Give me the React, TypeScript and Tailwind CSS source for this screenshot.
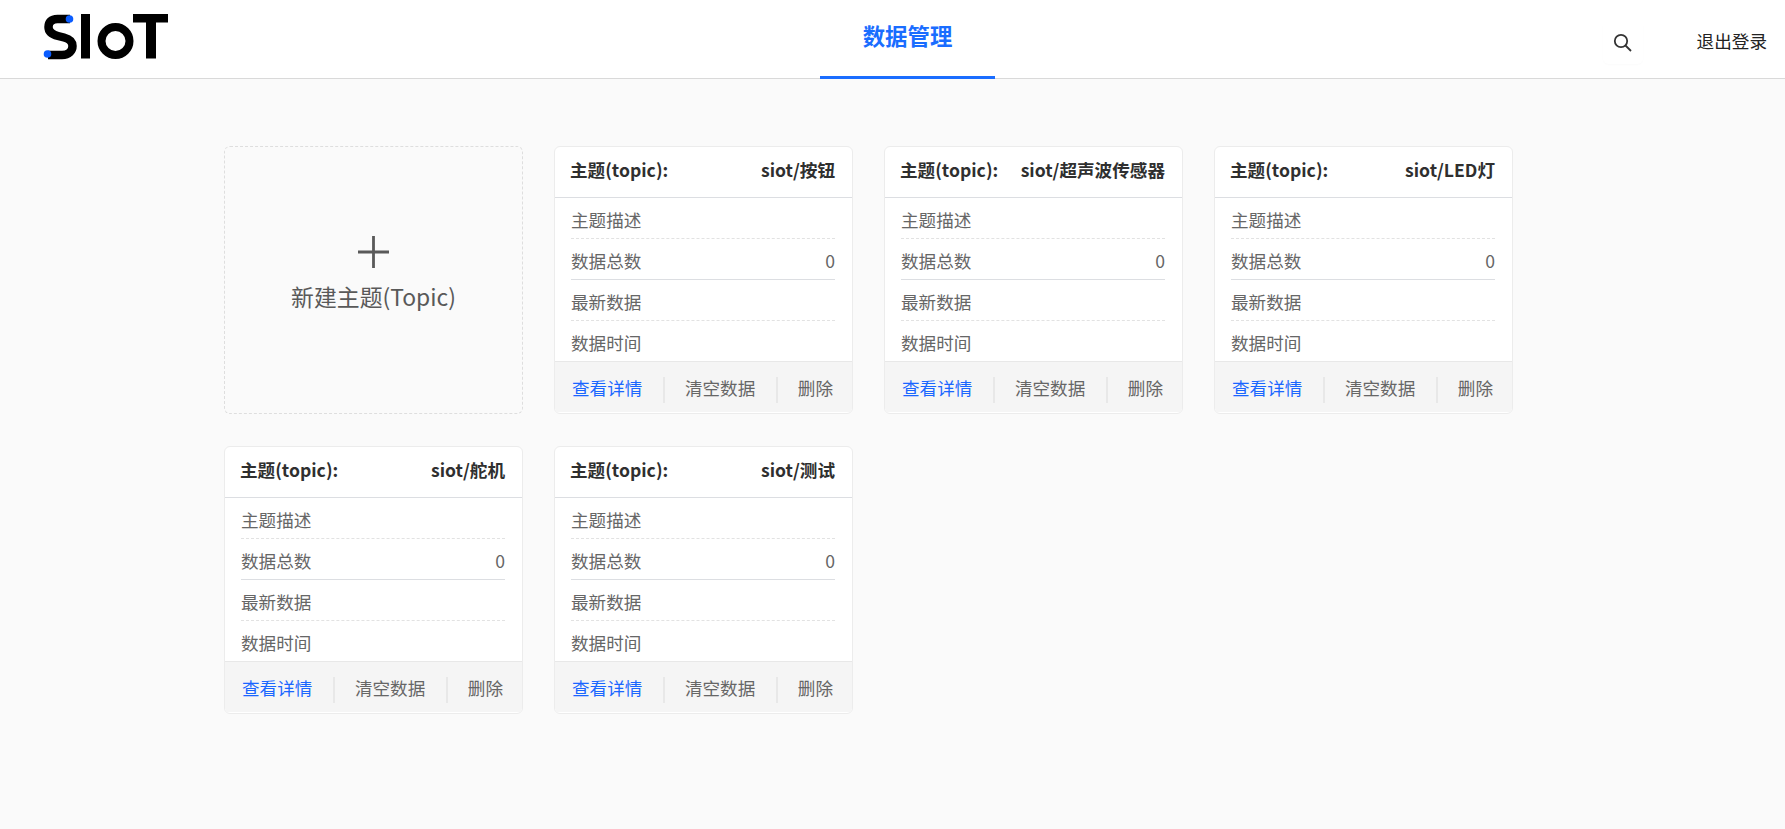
const topics = ['按钮', '超声波传感器', 'LED灯', '舵机', '测试'];

function Logo() {
  return (
    <svg width="130" height="50" viewBox="0 0 130 50" className="block">
      <path d="M27 4.500H14.500C8 4.500 5.500 8 5.500 12.500C5.500 17.500 9 20 15 21.500L21 23C27 24.500 29.500 27 29.500 31.500C29.500 36 26 40.500 19 40.500H5" fill="none" stroke="#000" strokeWidth="8.500" transform="translate(0 0.500)" />
      <rect x="38" y="0" width="9" height="44.500" fill="#000" />
      <circle cx="72.500" cy="27" r="14" fill="none" stroke="#000" strokeWidth="8" />
      <rect x="90" y="0" width="35" height="8.500" fill="#000" />
      <rect x="103" y="0" width="10" height="44.500" fill="#000" />
      <circle cx="26.500" cy="5" r="3.800" fill="#0a5cff" />
      <circle cx="4.500" cy="40" r="3.800" fill="#0a5cff" />
    </svg>
  );
}

function Row({ label, value, solid }: { label: string; value?: string; solid?: boolean }) {
  return (
    <div className={`flex h-[41px] items-center justify-between border-b pt-[5px] ${solid ? 'border-solid border-[#dcdee2]' : 'border-dashed border-[#e2e2e2]'}`}>
      <span>{label}</span>
      {value && <span>{value}</span>}
    </div>
  );
}

function TopicCard({ name }: { name: string }) {
  return (
    <div className="h-[268px] w-[299px] overflow-hidden rounded-md border border-[#ececec] bg-white">
      <div className="flex h-[51px] items-center justify-between border-b border-[#dcdee2] pb-[4px] pl-[15px] pr-[17px] font-bold text-[#2f2f2f]">
        <span>主题(topic):</span>
        <span>siot/{name}</span>
      </div>
      <div className="h-[164px] border-b border-[#e8e8e8] pl-[16px] pr-[17px] text-[#666]">
        <Row label="主题描述" />
        <Row label="数据总数" value="0" solid />
        <Row label="最新数据" />
        <div className="flex h-[40px] items-center pt-[5px]">数据时间</div>
      </div>
      <div className="flex h-[50px] items-center justify-between bg-[#f5f5f5] pl-[17px] pr-[19px] pt-[2px] text-[#666]">
        <span className="text-[#1a66ff]">查看详情</span>
        <span className="mt-[4px] h-[26px] w-[2px] bg-[#e8e8e8]" />
        <span>清空数据</span>
        <span className="mt-[4px] h-[26px] w-[2px] bg-[#e8e8e8]" />
        <span>删除</span>
      </div>
    </div>
  );
}

export default function App() {
  return (
    <div className="min-h-[829px] bg-[#fafafa] text-[17.6px] [font-family:'Noto_Sans_CJK_SC','Noto_Sans',sans-serif]">
      <header className="flex h-[79px] items-center justify-between border-b border-[#d9d9d9] bg-white pl-[43px] pr-[18px]">
        <Logo />
        <nav className="ml-[647px] flex h-[79px] w-[175px] items-center justify-center border-b-[3px] border-[#1a6dff] pb-[3px] text-[22.4px] font-semibold text-[#1a6dff]">
          数据管理
        </nav>
        <div className="ml-auto mt-[6px] flex items-center gap-[54px] text-[#222]">
          <div className="flex h-[44px] w-[40px] items-center justify-center rounded-md pt-[2px] shadow-[0_1px_2px_rgba(0,0,0,0.02)]">
            <svg width="20" height="20" viewBox="0 0 20 20" fill="none" stroke="#333" strokeWidth="1.800">
              <circle cx="8" cy="8" r="6.200" />
              <path d="M12.500 12.500L18 18" />
            </svg>
          </div>
          <span className="pb-[1px]">退出登录</span>
        </div>
      </header>
      <main className="ml-[224px] grid w-[1200px] grid-cols-[repeat(4,299px)] gap-x-[31px] gap-y-[32px] pt-[67px]">
        <div className="flex h-[268px] flex-col items-center justify-center rounded-md border border-dashed border-[#dedede] pb-[12px] text-[22.88px] text-[#595959]">
          <svg width="31" height="32" viewBox="0 0 31 32" className="mb-[12px]">
            <path d="M15.500 0V32M0 16H31" stroke="#595959" strokeWidth="2.800" fill="none" />
          </svg>
          <span className="leading-[32px]">新建主题(Topic)</span>
        </div>
        {topics.map((t) => (
          <TopicCard key={t} name={t} />
        ))}
      </main>
    </div>
  );
}
